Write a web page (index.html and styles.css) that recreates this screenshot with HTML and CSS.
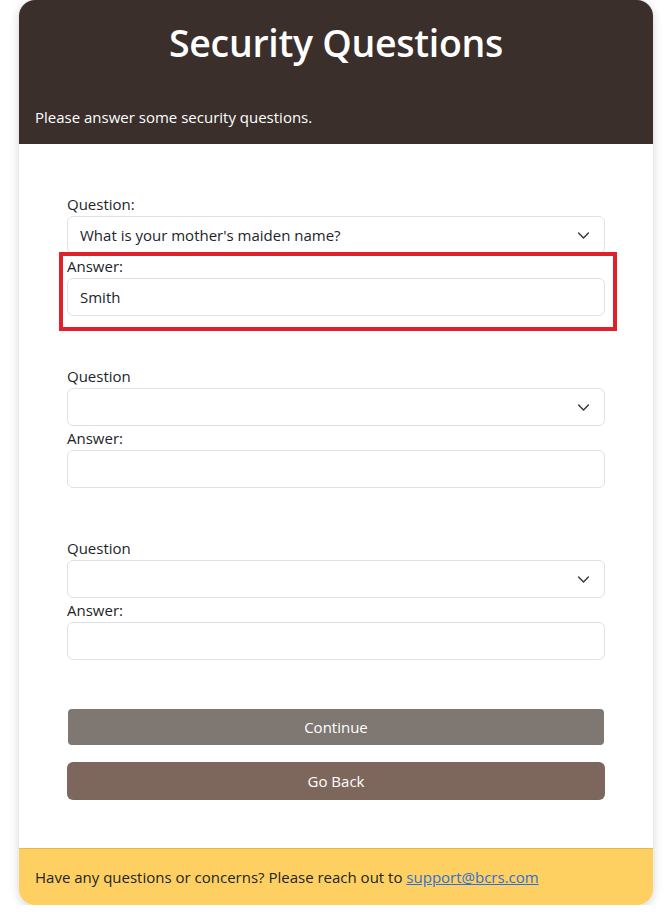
FILE: index.html
```html
<!DOCTYPE html>
<html lang="en">
<head>
<meta charset="utf-8">
<title>Security Questions</title>
<link rel="stylesheet" href="styles.css">
</head>
<body>
<div class="card">
  <div class="card-header">
    <h1 class="title">Security Questions</h1>
    <p class="subtitle">Please answer some security questions.</p>
  </div>
  <div class="card-body">
    <div class="group">
      <label class="label">Question:</label>
      <div class="select">
        <span class="select-text">What is your mother's maiden name?</span>
        <svg class="chevron" width="13" height="13" viewBox="0 0 16 16"><path d="M2 5l6 6 6-6" fill="none" stroke="#343a40" stroke-width="1.8" stroke-linecap="round" stroke-linejoin="round"/></svg>
      </div>
      <div class="answer">
        <label class="label">Answer:</label>
        <div class="input">Smith</div>
        <div class="highlight"></div>
      </div>
    </div>
    <div class="group">
      <label class="label">Question</label>
      <div class="select">
        <span class="select-text"></span>
        <svg class="chevron" width="13" height="13" viewBox="0 0 16 16"><path d="M2 5l6 6 6-6" fill="none" stroke="#343a40" stroke-width="1.8" stroke-linecap="round" stroke-linejoin="round"/></svg>
      </div>
      <div class="answer">
        <label class="label">Answer:</label>
        <div class="input"></div>
      </div>
    </div>
    <div class="group">
      <label class="label">Question</label>
      <div class="select">
        <span class="select-text"></span>
        <svg class="chevron" width="13" height="13" viewBox="0 0 16 16"><path d="M2 5l6 6 6-6" fill="none" stroke="#343a40" stroke-width="1.8" stroke-linecap="round" stroke-linejoin="round"/></svg>
      </div>
      <div class="answer">
        <label class="label">Answer:</label>
        <div class="input"></div>
      </div>
    </div>
    <div class="actions">
      <button class="btn btn-continue">Continue</button>
      <button class="btn btn-back">Go Back</button>
    </div>
  </div>
  <div class="card-footer">
    Have any questions or concerns? Please reach out to <a href="#" class="link">support@bcrs.com</a>
  </div>
</div>
</body>
</html>
```
FILE: styles.css
```css
* { box-sizing: border-box; }
html, body { margin: 0; padding: 0; background: #ffffff; }
body {
  font-family: "Open Sans", "Noto Sans", sans-serif;
  font-size: 15px;
  line-height: 24px;
  color: #212529;
}
.card {
  width: 634px;
  margin-left: 19px;
  border-radius: 16px;
  overflow: hidden;
  background: #fff;
  box-shadow: 0 2px 10px rgba(0,0,0,0.18);
}
.card-header {
  background: #3a2f2b;
  color: #fff;
  padding: 19px 16px 15px;
}
.title {
  margin: 0 0 38px;
  text-align: center;
  font-size: 37.5px;
  font-weight: 600;
  line-height: 48px;
  letter-spacing: -0.3px;
}
.subtitle {
  margin: 0;
  font-size: 15px;
  line-height: 24px;
}
.card-body {
  padding: 48px;
  display: flex;
  flex-direction: column;
  gap: 48px;
}
.group { display: flex; flex-direction: column; }
.label { display: block; height: 24px; line-height: 24px; }
.select, .input {
  height: 38px;
  border: 1px solid #dee2e6;
  border-radius: 6px;
  padding: 0 12px;
  display: flex;
  align-items: center;
  background: #fff;
}
.select { justify-content: space-between; }
.chevron { margin-right: 2px; }
.answer { position: relative; display: flex; flex-direction: column; }
.highlight {
  position: absolute;
  top: -2px;
  left: -8px;
  right: -12px;
  bottom: -15px;
  border: 4px solid #e0202a;
  pointer-events: none;
}
.actions { display: flex; flex-direction: column; margin-top: 1px; gap: 17px; }
.btn {
  font-family: inherit;
  font-size: 15px;
  color: #fff;
  border: none;
  border-radius: 6px;
  width: 100%;
}
.btn-continue {
  background: #7e7772;
  height: 36px;
  width: 536px;
  margin: 0 1px;
  border-radius: 4px;
}
.btn-back { background: #7d675c; height: 38px; }
.card-footer {
  background: #fed061;
  border-top: 1px solid #e2b850;
  padding: 16px;
  line-height: 24px;
}
.link { color: #2f6fd6; text-decoration: underline; }
```
